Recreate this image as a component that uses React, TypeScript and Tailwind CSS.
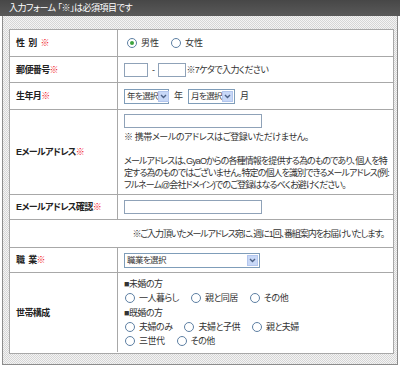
import React from 'react';

const font = "font-['Liberation_Sans','Noto_Sans_CJK_JP',sans-serif] [font-feature-settings:'palt']";

function Req() {
  return <span className="text-[#f01020]">※</span>;
}

function Radio({ checked = false, label }: { checked?: boolean; label: string }) {
  return (
    <label className="flex items-center gap-[4px]">
      <span className="w-[10px] h-[10px] rounded-full border border-[#5d7fa3] bg-white flex items-center justify-center">
        {checked && <span className="w-[4px] h-[4px] rounded-full bg-[#3ea33e]" />}
      </span>
      <span>{label}</span>
    </label>
  );
}

function Select({ text, width }: { text: string; width: string }) {
  return (
    <div className={`flex items-center h-[15px] border border-[#7f9db9] bg-white ${width}`}>
      <span className="flex-1 pl-[2px] leading-none whitespace-nowrap text-[8.5px] tracking-[-0.6px]">{text}</span>
      <span className="w-[11px] h-[11px] mr-[1px] shrink-0 bg-[#c8d8f7] border border-[#b3c6ee] flex items-center justify-center">
        <svg width="7" height="5" viewBox="0 0 7 5">
          <path d="M1 1 L3.5 3.5 L6 1" stroke="#4d6185" strokeWidth="1.4" fill="none" />
        </svg>
      </span>
    </div>
  );
}

function Input({ width }: { width: string }) {
  return <div className={`h-[14px] border border-[#8fa2b8] bg-white ${width}`} />;
}

function Row({ label, height, children, last = false }: { label: React.ReactNode; height: string; children: React.ReactNode; last?: boolean }) {
  return (
    <div className={`flex ${height} ${last ? '' : 'border-b border-[#a8a8a8]'}`}>
      <div className="w-[108px] shrink-0 border-r border-[#a8a8a8] flex items-center pl-[6px] font-bold text-[#222] tracking-[-0.6px]">
        {label}
      </div>
      <div className="flex-1 flex flex-col justify-center pl-[6px] pr-[8px]">{children}</div>
    </div>
  );
}

export default function App() {
  return (
    <div className={`w-[400px] h-[367px] bg-white text-[9px] leading-[12px] text-[#333] ${font}`}>
      {/* header */}
      <div className="h-[16px] bg-gradient-to-b from-[#474747] to-[#5a5a5a] text-white pl-[9px] flex items-center tracking-[-0.5px]">
        入力フォーム 「※」は必須項目です
      </div>
      <div className="px-[2px]">
        <div className="h-[349px] border border-t-0 border-[#8c8c8c] bg-[repeating-conic-gradient(#d6d6d6_0_25%,#f4f4f4_0_50%)] bg-[length:2px_2px] pl-[6px] pr-[3px] pt-[13px] pb-[10px]">
          <div className="bg-white border border-[#a8a8a8] h-full">
            <Row label={<span>性&nbsp;&nbsp;別&nbsp;&nbsp;<Req /></span>} height="h-[27px]">
              <div className="flex items-center gap-[12px] pl-[3px]">
                <Radio checked label="男性" />
                <Radio label="女性" />
              </div>
            </Row>
            <Row label={<span>郵便番号<Req /></span>} height="h-[26px]">
              <div className="flex items-center tracking-[-0.6px]">
                <Input width="w-[24px]" />
                <span className="mx-[4px]">-</span>
                <Input width="w-[28px]" />
                <span>※7ケタで入力ください</span>
              </div>
            </Row>
            <Row label={<span>生年月<Req /></span>} height="h-[27px]">
              <div className="flex items-center gap-[5px]">
                <Select text="年を選択" width="w-[45px]" />
                <span>年</span>
                <Select text="月を選択" width="w-[47px]" />
                <span>月</span>
              </div>
            </Row>
            <Row label={<span>Eメールアドレス<Req /></span>} height="h-[85px]">
              <Input width="w-[138px]" />
              <p className="mt-[3px] tracking-[-0.4px]">※ 携帯メールのアドレスはご登録いただけません。</p>
              <p className="mt-[12px] tracking-[-0.9px] whitespace-nowrap">
                メールアドレスは、GyaOからの各種情報を提供する為のものであり、個人を特
                <br />
                定する為のものではございません。特定の個人を識別できるメールアドレス(例:
                <br />
                フルネーム@会社ドメイン)でのご登録はなるべくお避けください。
              </p>
            </Row>
            <Row label={<span>Eメールアドレス確認<Req /></span>} height="h-[25px]">
              <Input width="w-[138px]" />
            </Row>
            <div className="h-[28px] border-b border-[#a8a8a8] flex items-center justify-end pr-[9px] tracking-[-1.1px]">
              ※ご入力頂いたメールアドレス宛に、週に1回、番組案内をお届けいたします。
            </div>
            <Row label={<span>職&nbsp;&nbsp;業<Req /></span>} height="h-[25px]">
              <Select text="職業を選択" width="w-[136px]" />
            </Row>
            <Row label={<span>世帯構成</span>} height="h-[79px]" last>
              <div className="flex flex-col gap-[2px] tracking-[-0.5px]">
                <p>■未婚の方</p>
                <div className="flex items-center gap-[12px] pl-[1px]">
                  <Radio label="一人暮らし" />
                  <Radio label="親と同居" />
                  <Radio label="その他" />
                </div>
                <p className="mt-[1px]">■既婚の方</p>
                <div className="flex items-center gap-[12px] pl-[1px]">
                  <Radio label="夫婦のみ" />
                  <Radio label="夫婦と子供" />
                  <Radio label="親と夫婦" />
                </div>
                <div className="flex items-center gap-[12px] pl-[1px]">
                  <Radio label="三世代" />
                  <Radio label="その他" />
                </div>
              </div>
            </Row>
          </div>
        </div>
      </div>
    </div>
  );
}
